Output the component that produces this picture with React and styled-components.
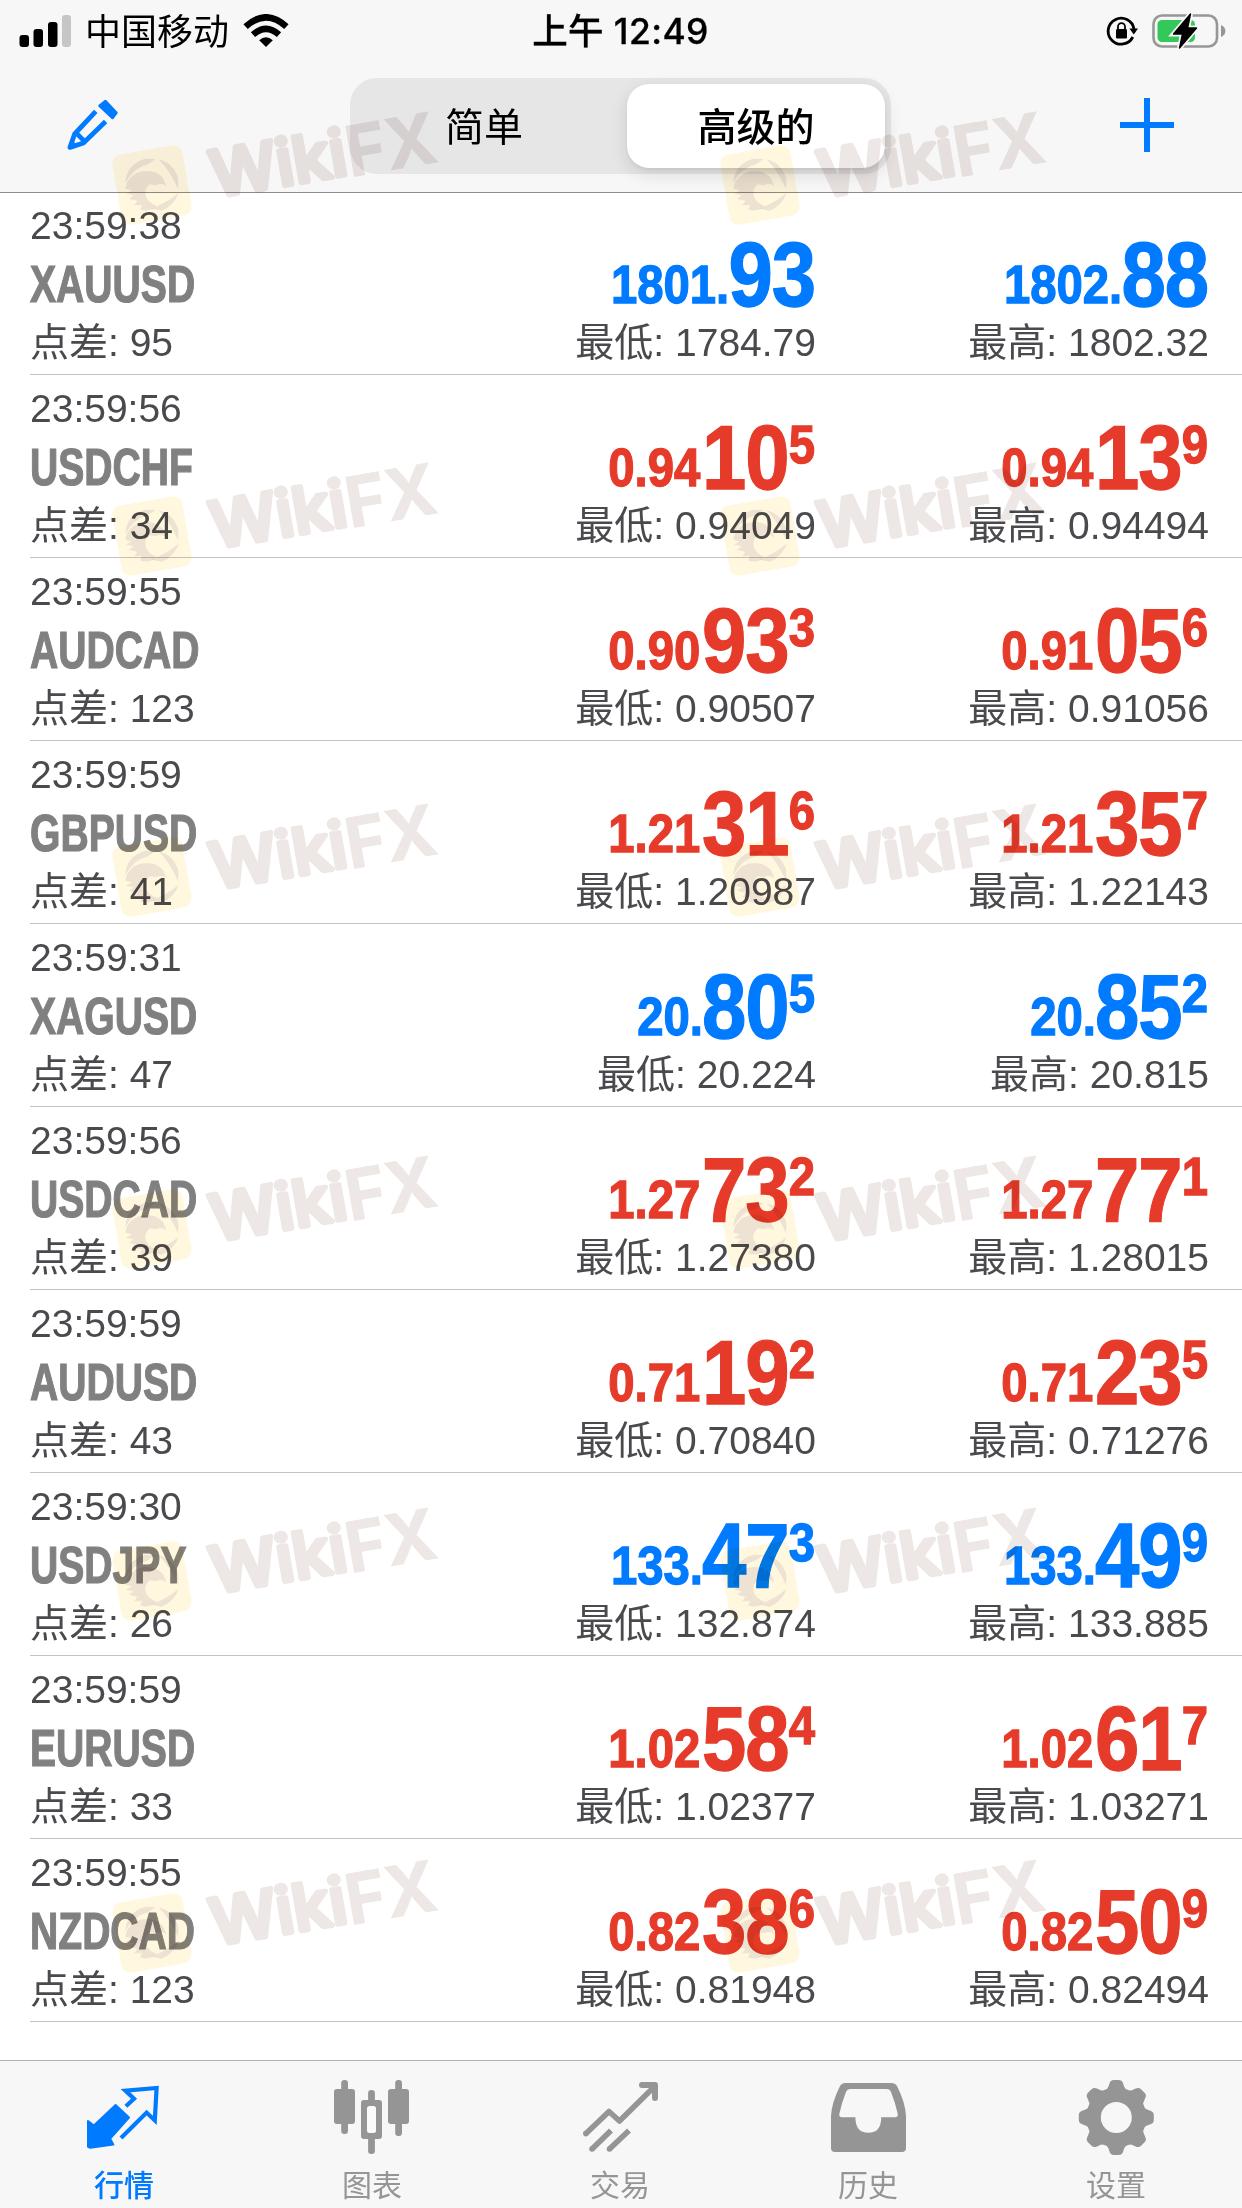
import React from 'react';
import styled, { createGlobalStyle } from 'styled-components';

const BLUE = '#007aff';
const RED = '#e63b2a';
const GREY = '#959595';

const GlobalStyle = createGlobalStyle`
  * { box-sizing: border-box; }
  body {
    margin: 0;
    background: #fff;
    font-family: "Liberation Sans", "Noto Sans CJK SC", sans-serif;
  }
  svg { display: block; }
`;

const Screen = styled.div`
  position: relative;
  display: flex;
  flex-direction: column;
  width: 1242px;
  height: 2208px;
  overflow: hidden;
  background: #fff;
`;

const Header = styled.header`
  height: 193px;
  flex: none;
  background: #f7f7f7;
  border-bottom: 1px solid #8c8c8e;
`;

const StatusBar = styled.div`
  display: grid;
  grid-template-columns: 1fr auto 1fr;
  align-items: center;
  height: 62px;
  padding: 0 15px 0 14px;
  font-family: Inter, "Noto Sans CJK SC", sans-serif;
  color: #000;
`;

const StatusGroup = styled.div`
  display: flex;
  align-items: center;
  justify-content: ${(p) => (p.$end ? 'flex-end' : 'flex-start')};
  gap: ${(p) => p.$gap}px;
  padding-left: 5px;
`;

const Carrier = styled.span`
  margin-top: 2px;
  font-size: 36px;
  line-height: 60px;
`;

const Clock = styled.span`
  margin-top: 2px;
  font-size: 35.5px;
  font-weight: 500;
  line-height: 60px;
  letter-spacing: 0.4px;
  -webkit-text-stroke: 0.3px #000;
`;

const NavBar = styled.div`
  display: flex;
  align-items: center;
  justify-content: space-between;
  height: 128px;
  padding: 0 68px 0 63px;
`;

const IconButton = styled.button`
  display: flex;
  padding: 0;
  margin-bottom: 3px;
  border: 0;
  background: none;
`;

const Segmented = styled.div`
  display: flex;
  justify-content: space-between;
  width: 541px;
  height: 96px;
  padding: 6px;
  border-radius: 27px;
  background: #e6e6e7;
`;

const Segment = styled.button`
  flex: none;
  width: ${(p) => (p.$active ? 258 : 256)}px;
  height: 84px;
  padding: 0 0 4px;
  border: 0;
  border-radius: 22px;
  color: #000;
  font-family: "Noto Sans CJK SC", sans-serif;
  font-size: 39px;
  line-height: 80px;
  font-weight: ${(p) => (p.$active ? 500 : 400)};
  background: ${(p) => (p.$active ? '#fff' : 'transparent')};
  box-shadow: ${(p) => (p.$active ? '0 6px 18px rgba(0,0,0,.12), 0 2px 3px rgba(0,0,0,.05)' : 'none')};
`;

const QuoteList = styled.main`
  flex: 1;
  display: flex;
  flex-direction: column;
  padding-left: 30px;
`;

const QuoteRow = styled.article`
  display: grid;
  grid-template-columns: 1fr 380px 393px;
  height: 183px;
  padding: 0 34px 5px 0;
  border-bottom: 1px solid #c4c4c6;
  &:first-child { height: 182px; }
`;

const Column = styled.div`
  display: flex;
  flex-direction: column;
  justify-content: flex-end;
  align-items: ${(p) => (p.$right ? 'flex-end' : 'flex-start')};
`;

const Detail = styled.div`
  margin-right: -1px;
  font-size: 39px;
  line-height: 52px;
  color: #4a4a4e;
  white-space: nowrap;
`;

const Pair = styled.div`
  margin: 2px 0 3px;
  font-size: 52px;
  font-weight: 700;
  line-height: 60px;
  color: #808080;
  -webkit-text-stroke: 1.2px #808080;
  transform: scaleX(0.752);
  transform-origin: left center;
`;

const Price = styled.div`
  color: ${(p) => (p.$up ? BLUE : RED)};
  font-size: 91px;
  font-weight: 700;
  line-height: 84px;
  white-space: nowrap;
  -webkit-text-stroke: 1.3px currentColor;
  transform: scaleX(0.876);
  transform-origin: right center;
`;

const Lead = styled.span`
  margin-right: ${(p) => (p.$gap ? 2 : -1)}px;
  font-size: 54px;
  line-height: 0;
  vertical-align: 3px;
`;

const Pips = styled.span`
  letter-spacing: -1.2px;
`;

const Fraction = styled.span`
  font-size: 54px;
  line-height: 0;
  vertical-align: 26px;
`;

const TabBar = styled.nav`
  flex: none;
  display: flex;
  height: 148px;
  border-top: 1px solid #b0b2b0;
  background: #f7f7f7;
`;

const Tab = styled.button`
  display: flex;
  flex-direction: column;
  align-items: center;
  width: 248px;
  padding: 15px 0 0;
  border: 0;
  background: none;
  color: ${(p) => (p.$active ? BLUE : GREY)};
  font-family: "Noto Sans CJK SC", sans-serif;
  font-size: 30px;
  line-height: 40px;
`;

const TabLabel = styled.span`
  margin-top: 5px;
  font-weight: ${(p) => (p.$active ? 500 : 400)};
`;

const WatermarkLayer = styled.div`
  position: absolute;
  inset: 0;
  pointer-events: none;
  mix-blend-mode: multiply;
`;

const WatermarkSlot = styled.div`
  position: absolute;
  left: ${(p) => p.$x}px;
  top: ${(p) => p.$y}px;
`;

const SignalIcon = () => (
  <svg width="52" height="32" viewBox="0 0 52 32">
    <rect x="0.5" y="20" width="9.5" height="12" rx="3" />
    <rect x="14.5" y="14" width="9.5" height="18" rx="3" />
    <rect x="29" y="7" width="9.5" height="25" rx="3" />
    <rect x="43" y="0" width="9" height="32" rx="3" fill="#c6c6c6" />
  </svg>
);

const WifiIcon = () => (
  <svg width="46" height="34" viewBox="0 0 46 34">
    <g fill="none" stroke="#000" strokeWidth="6.4">
      <path d="M2.6 12.6 Q23 -6 43.4 12.6" />
      <path d="M10 20.6 Q23 9 36 20.6" />
    </g>
    <path d="M23 33 L16.2 26.2 Q23 20.4 29.8 26.2 Z" />
  </svg>
);

const LockIcon = () => (
  <svg width="34" height="32" viewBox="0 0 34 32">
    <path d="M26.8 22 A13 13 0 1 1 28 14" fill="none" stroke="#000" strokeWidth="2.8" />
    <path d="M23.4 13.4 H32 L27.8 19.6 Z" />
    <rect x="10" y="14" width="11" height="9.6" rx="1.4" />
    <path d="M12 15 V11.6 a3.5 3.5 0 0 1 7 0 V15" fill="none" stroke="#000" strokeWidth="1.8" />
  </svg>
);

const BatteryIcon = () => (
  <svg width="75" height="38" viewBox="0 0 75 38">
    <rect x="1.5" y="3.5" width="63.5" height="31" rx="8.5" fill="none" stroke="#979797" strokeWidth="2.6" />
    <path d="M69 13 Q73.4 15 73.4 19 Q73.4 23 69 25 Z" fill="#979797" />
    <rect x="5.5" y="8" width="37.5" height="22" rx="4.5" fill="#34c759" />
    <path
      d="M38.5 2 L21.5 22 H30.5 L27.5 36 L44.5 16 H35.6 Z"
      fill="#000"
      stroke="#f7f7f7"
      strokeWidth="5"
      paintOrder="stroke"
    />
    <path d="M38.5 2 L21.5 22 H30.5 L27.5 36 L44.5 16 H35.6 Z" stroke="#000" strokeWidth="1.4" strokeLinejoin="round" />
  </svg>
);

const PencilIcon = () => (
  <svg width="60" height="60" viewBox="0 0 60 60">
    <path d="M42.5 6 L53.5 17.8 L49.6 23 L36.5 10.8 Z" fill={BLUE} stroke={BLUE} strokeWidth="2.5" strokeLinejoin="round" />
    <g fill="none" stroke={BLUE} strokeWidth="4.8" strokeLinejoin="round">
      <path d="M32.8 16.4 L11.6 39 L7 52.4 L20.4 48 L42.6 26.6" />
      <path d="M12.6 37.4 L22.6 47.4" />
    </g>
    <path d="M5 54 L8.6 44.4 L14.4 50.8 Z" fill={BLUE} />
  </svg>
);

const PlusIcon = () => (
  <svg width="56" height="56" viewBox="0 0 56 56">
    <path d="M29 1 V55 M2 28 H56" stroke={BLUE} strokeWidth="6" />
  </svg>
);

const QuotesIcon = () => (
  <svg width="80" height="82" viewBox="0 -4 80 82">
    <path
      d="M4 41 L9.9 45.6 L31.6 25 L45 37.5 L26.2 58.6 L29.4 64.6 L6.3 67.8 L4 66.8 Z"
      fill="currentColor"
      stroke="currentColor"
      strokeWidth="2"
      strokeLinejoin="round"
    />
    <path
      d="M41.9 26.2 L50 18.8 L41.4 10.6 L72.6 8 L70.8 40.4 L62.6 32.6 L37 58"
      fill="none"
      stroke="currentColor"
      strokeWidth="4.2"
    />
  </svg>
);

const ChartIcon = () => (
  <svg width="82" height="82" viewBox="0 0 82 82" fill="currentColor">
    <rect x="3" y="13" width="21" height="35" rx="3" />
    <rect x="10.2" y="4" width="6.8" height="54" rx="3.2" />
    <rect x="57" y="13" width="21" height="35" rx="3" />
    <rect x="64.2" y="4" width="6.8" height="56" rx="3.2" />
    <rect x="37.1" y="14" width="6.8" height="64" rx="3.2" />
    <rect x="30" y="24" width="21" height="39" rx="3" />
    <rect x="36" y="30" width="9" height="27" rx="2.5" fill="#fafafa" />
  </svg>
);

const TradeIcon = () => (
  <svg width="82" height="82" viewBox="0 0 82 82" fill="none" stroke="currentColor" strokeWidth="5.6">
    <path d="M6.5 58 L30 35.5 L40.5 45 L75 11" strokeLinejoin="round" />
    <circle cx="6.8" cy="57.6" r="2.8" fill="currentColor" stroke="none" />
    <path d="M63 9 H76 V22" strokeWidth="6" strokeLinecap="round" strokeLinejoin="round" />
    <path d="M13 73 L32 54.5 M30.5 73 L50 54.5" />
    <circle cx="13" cy="73" r="2.8" fill="currentColor" stroke="none" />
    <circle cx="30.5" cy="73" r="2.8" fill="currentColor" stroke="none" />
  </svg>
);

const HistoryIcon = () => (
  <svg width="82" height="82" viewBox="0 0 82 82">
    <path
      fill="currentColor"
      fillRule="evenodd"
      d="M4 40 Q4.5 27 13 10 Q14.8 7 18.5 7 H64.5 Q68.2 7 70 10 Q78.5 27 79 40 V72 Q79 76 75 76 H8 Q4 76 4 72 Z
         M12.3 38 Q12 41.2 15 41.2 H28.4 Q28.4 56.8 41.4 56.8 Q54.2 56.8 54.2 41.2 H68 Q71 41.2 70.8 38 Q68.6 27.6 64 16 Q62.8 13 59.5 13 H23.5 Q20.2 13 19 16 Q14.4 27.6 12.3 38 Z"
    />
  </svg>
);

const TOOTH = 'M-12 -26 Q-8 -29 -7 -33.5 Q-6 -37.5 -2.5 -37.5 H2.5 Q6 -37.5 7 -33.5 Q8 -29 12 -26 Z';

const SettingsIcon = () => (
  <svg width="82" height="82" viewBox="0 0 82 82" fill="currentColor">
    <g transform="translate(41.3 41.5)">
      <circle r="22.7" fill="none" stroke="currentColor" strokeWidth="14.4" />
      {[0, 45, 90, 135, 180, 225, 270, 315].map((a) => (
        <path key={a} d={TOOTH} transform={`rotate(${a})`} />
      ))}
    </g>
  </svg>
);

const Watermark = () => (
  <svg width="350" height="140" viewBox="0 0 350 140">
    <g transform="translate(52 96) rotate(-9.8)">
      <rect x="-35.5" y="-35.5" width="71" height="71" rx="9" fill="#ffcd3c" fillOpacity="0.17" />
      <g fill="#8a6a90" fillOpacity="0.15">
        <path d="M-26 -6 Q-22 -25 -2 -27 L8 -25 L-1 -21 Q-16 -20 -26 -6 Z" />
        <path d="M11 -24 Q25 -18 27 -2 L25 9 Q20 -12 11 -24 Z" />
        <path d="M25 12 Q19 24 5 27 L-5 23 Q13 20 25 12 Z" />
        <path d="M-27 -1 Q-22 -14 -8 -15 Q6 -15 12 -5 L14 4 Q10 -1 4 1 L-2 -1 Q-9 3 -8 10 Q-6 18 1 21 Q-6 27 -16 22 L-13 18 L-21 17 L-17 13 L-25 10 L-20 7 L-27 4 L-21 2 Z" />
      </g>
    </g>
    <g
      transform="translate(115 111.5) rotate(-9.8)"
      fontFamily="Inter, sans-serif"
      fill="#957068"
      stroke="#957068"
      strokeLinejoin="round"
      opacity="0.17"
    >
      <text x="0" y="-3" fontSize="64" fontWeight="500" strokeWidth="5" textLength="137" lengthAdjust="spacingAndGlyphs">Wiki</text>
      <text x="137" y="0" fontSize="70" fontWeight="700" strokeWidth="0.8" textLength="91" lengthAdjust="spacingAndGlyphs">FX</text>
    </g>
  </svg>
);

const WATERMARK_ROWS = [89, 440, 781, 1133, 1485, 1837];
const WATERMARK_COLUMNS = [100, 708];

const QUOTES = [
  { time: '23:59:38', pair: 'XAUUSD', spread: 95, up: true, bid: ['1801.', '93', ''], ask: ['1802.', '88', ''], low: '1784.79', high: '1802.32' },
  { time: '23:59:56', pair: 'USDCHF', spread: 34, up: false, bid: ['0.94', '10', '5'], ask: ['0.94', '13', '9'], low: '0.94049', high: '0.94494' },
  { time: '23:59:55', pair: 'AUDCAD', spread: 123, up: false, bid: ['0.90', '93', '3'], ask: ['0.91', '05', '6'], low: '0.90507', high: '0.91056' },
  { time: '23:59:59', pair: 'GBPUSD', spread: 41, up: false, bid: ['1.21', '31', '6'], ask: ['1.21', '35', '7'], low: '1.20987', high: '1.22143' },
  { time: '23:59:31', pair: 'XAGUSD', spread: 47, up: true, bid: ['20.', '80', '5'], ask: ['20.', '85', '2'], low: '20.224', high: '20.815' },
  { time: '23:59:56', pair: 'USDCAD', spread: 39, up: false, bid: ['1.27', '73', '2'], ask: ['1.27', '77', '1'], low: '1.27380', high: '1.28015' },
  { time: '23:59:59', pair: 'AUDUSD', spread: 43, up: false, bid: ['0.71', '19', '2'], ask: ['0.71', '23', '5'], low: '0.70840', high: '0.71276' },
  { time: '23:59:30', pair: 'USDJPY', spread: 26, up: true, bid: ['133.', '47', '3'], ask: ['133.', '49', '9'], low: '132.874', high: '133.885' },
  { time: '23:59:59', pair: 'EURUSD', spread: 33, up: false, bid: ['1.02', '58', '4'], ask: ['1.02', '61', '7'], low: '1.02377', high: '1.03271' },
  { time: '23:59:55', pair: 'NZDCAD', spread: 123, up: false, bid: ['0.82', '38', '6'], ask: ['0.82', '50', '9'], low: '0.81948', high: '0.82494' },
];

const TABS = [
  { label: '行情', Icon: QuotesIcon, active: true },
  { label: '图表', Icon: ChartIcon },
  { label: '交易', Icon: TradeIcon },
  { label: '历史', Icon: HistoryIcon },
  { label: '设置', Icon: SettingsIcon },
];

const PriceColumn = ({ parts, up, label, value }) => (
  <Column $right>
    <Price $up={up}>
      <Lead $gap={!parts[0].endsWith('.')}>{parts[0]}</Lead>
      <Pips>{parts[1]}</Pips>
      {parts[2] && <Fraction>{parts[2]}</Fraction>}
    </Price>
    <Detail>{`${label}: ${value}`}</Detail>
  </Column>
);

export default function App() {
  return (
    <Screen>
      <GlobalStyle />
      <Header>
        <StatusBar>
          <StatusGroup $gap={14}>
            <SignalIcon />
            <Carrier>中国移动</Carrier>
            <WifiIcon />
          </StatusGroup>
          <Clock>上午 12:49</Clock>
          <StatusGroup $gap={12} $end>
            <LockIcon />
            <BatteryIcon />
          </StatusGroup>
        </StatusBar>
        <NavBar>
          <IconButton aria-label="编辑"><PencilIcon /></IconButton>
          <Segmented>
            <Segment>简单</Segment>
            <Segment $active>高级的</Segment>
          </Segmented>
          <IconButton aria-label="添加"><PlusIcon /></IconButton>
        </NavBar>
      </Header>
      <QuoteList>
        {QUOTES.map((q) => (
          <QuoteRow key={q.pair}>
            <Column>
              <Detail>{q.time}</Detail>
              <Pair>{q.pair}</Pair>
              <Detail>{`点差: ${q.spread}`}</Detail>
            </Column>
            <PriceColumn parts={q.bid} up={q.up} label="最低" value={q.low} />
            <PriceColumn parts={q.ask} up={q.up} label="最高" value={q.high} />
          </QuoteRow>
        ))}
      </QuoteList>
      <TabBar>
        {TABS.map(({ label, Icon, active }) => (
          <Tab key={label} $active={active}>
            <Icon />
            <TabLabel $active={active}>{label}</TabLabel>
          </Tab>
        ))}
      </TabBar>
      <WatermarkLayer aria-hidden="true">
        {WATERMARK_ROWS.map((y) =>
          WATERMARK_COLUMNS.map((x) => (
            <WatermarkSlot key={`${x}-${y}`} $x={x} $y={y}>
              <Watermark />
            </WatermarkSlot>
          ))
        )}
      </WatermarkLayer>
    </Screen>
  );
}
